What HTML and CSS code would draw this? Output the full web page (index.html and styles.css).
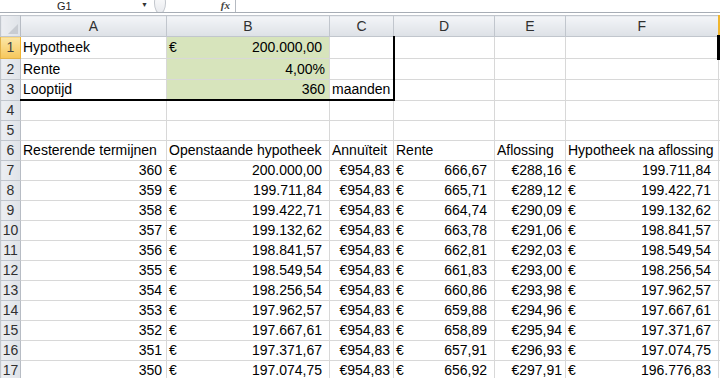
FILE: index.html
```html
<!DOCTYPE html>
<html lang="nl">
<head>
    <meta charset="UTF-8">
    <title>Hypotheek berekening</title>
    <link rel="stylesheet" href="styles.css">
</head>
<body>
    <!-- name box + formula bar -->
    <div class="formula-bar">
        <div class="name-box">
            <span class="cell-ref">G1</span>
            <span class="drop">&#9660;</span>
        </div>
        <div class="grip"></div>
        <div class="fx">fx</div>
        <div class="formula"></div>
    </div>

    <table class="sheet">
        <colgroup>
            <col class="c-row">
            <col class="c-a">
            <col class="c-b">
            <col class="c-c">
            <col class="c-d">
            <col class="c-e">
            <col class="c-f">
            <col class="c-g">
        </colgroup>
        <tr class="col-heads">
            <th class="corner"><span class="tri"></span></th>
            <th>A</th><th>B</th><th>C</th><th>D</th><th>E</th><th>F</th><th class="active-col"></th>
        </tr>
        <tr>
            <th class="active-row">1</th>
            <td>Hypotheek</td>
            <td class="input"><div class="money"><span>€</span><span>200.000,00</span></div></td>
            <td class="box-right"></td><td></td><td></td><td></td>
            <td class="active-cell"></td>
        </tr>
        <tr>
            <th>2</th>
            <td>Rente</td>
            <td class="input num">4,00%</td>
            <td class="box-right"></td><td></td><td></td><td></td><td></td>
        </tr>
        <tr>
            <th>3</th>
            <td class="box-bottom">Looptijd</td>
            <td class="input num box-bottom">360</td>
            <td class="box-right box-bottom">maanden</td><td></td><td></td><td></td><td></td>
        </tr>
        <tr><th>4</th><td></td><td></td><td></td><td></td><td></td><td></td><td></td></tr>
        <tr><th>5</th><td></td><td></td><td></td><td></td><td></td><td></td><td></td></tr>
        <tr>
            <th>6</th>
            <td>Resterende termijnen</td>
            <td>Openstaande hypotheek</td>
            <td>Annuïteit</td>
            <td>Rente</td>
            <td>Aflossing</td>
            <td>Hypotheek na aflossing</td>
            <td></td>
        </tr>
        <tbody id="schedule"></tbody>
    </table>

    <script>
        // aflossingsschema: termijn, openstaand, rente, aflossing, rest
        var rows = [
            [360, '200.000,00', '666,67', '288,16', '199.711,84'],
            [359, '199.711,84', '665,71', '289,12', '199.422,71'],
            [358, '199.422,71', '664,74', '290,09', '199.132,62'],
            [357, '199.132,62', '663,78', '291,06', '198.841,57'],
            [356, '198.841,57', '662,81', '292,03', '198.549,54'],
            [355, '198.549,54', '661,83', '293,00', '198.256,54'],
            [354, '198.256,54', '660,86', '293,98', '197.962,57'],
            [353, '197.962,57', '659,88', '294,96', '197.667,61'],
            [352, '197.667,61', '658,89', '295,94', '197.371,67'],
            [351, '197.371,67', '657,91', '296,93', '197.074,75'],
            [350, '197.074,75', '656,92', '297,91', '196.776,83']
        ];

        function money(value) {
            return '<div class="money"><span>€</span><span>' + value + '</span></div>';
        }

        var body = document.getElementById('schedule');
        rows.forEach(function(r, i) {
            var tr = document.createElement('tr');
            tr.innerHTML =
                '<th>' + (i + 7) + '</th>' +
                '<td class="num">' + r[0] + '</td>' +
                '<td>' + money(r[1]) + '</td>' +
                '<td class="num tight">€954,83</td>' +
                '<td>' + money(r[2]) + '</td>' +
                '<td class="num tight">€' + r[3] + '</td>' +
                '<td>' + money(r[4]) + '</td>' +
                '<td></td>';
            body.appendChild(tr);
        });
    </script>
</body>
</html>
```

FILE: styles.css
```css
html, body {
    margin: 0;
    overflow: hidden;
    background: #fff;
}
body {
    font-family: "Liberation Sans", Arial, sans-serif;
    font-size: 14px;
    color: #000;
    width: 720px;
    height: 378px;
}

/* formula bar */
.formula-bar {
    display: flex;
    align-items: flex-end;
    height: 12px;
    overflow: hidden;
    border-bottom: 1px solid #a7adb5;
    margin-bottom: 2px;
}
.name-box {
    width: 150px;
    position: relative;
    height: 12px;
}
.cell-ref {
    position: absolute;
    left: 57px;
    top: 0;
    font-size: 11px;
    line-height: 12px;
    color: #222;
}
.drop {
    position: absolute;
    left: 141px;
    top: 1px;
    font-size: 7px;
    line-height: 7px;
    color: #333;
}
.grip {
    width: 12px;
    height: 22px;
    margin-left: 4px;
    margin-bottom: -2px;
    border-radius: 50%;
    border: 1px solid #c3c7cd;
    background: linear-gradient(#fff, #e8eaee);
    box-sizing: border-box;
}
.fx {
    width: 70px;
    height: 12px;
    text-align: right;
    padding-right: 5px;
    box-sizing: border-box;
    font-family: "Liberation Serif", serif;
    font-style: italic;
    font-weight: bold;
    font-size: 11px;
    line-height: 11px;
    color: #444;
    border-right: 1px solid #b5bac1;
}
.formula {
    flex: 1;
}

/* grid */
.sheet {
    border-collapse: collapse;
    table-layout: fixed;
    width: 740px;
}
.c-row { width: 20px; }
.c-a { width: 146px; }
.c-b { width: 163px; }
.c-c { width: 64px; }
.c-d { width: 101px; }
.c-e { width: 71px; }
.c-f { width: 153px; }
.c-g { width: 22px; }

.sheet td, .sheet th {
    height: 19px;
    padding: 0 2px;
    line-height: 19px;
    white-space: nowrap;
    overflow: hidden;
    border: 1px solid #d8d8d8;
}
.sheet td {
    text-align: left;
}
.sheet th {
    font-weight: normal;
    color: #303030;
    background: linear-gradient(#f3f5f8, #dde1e6);
    border-color: #c1c6cd;
    padding: 0;
}
.col-heads th {
    text-align: center;
    border-top: 1px solid #c1c6cd;
}
.sheet tr > th:first-child {
    text-align: center;
    background: linear-gradient(90deg, #eceef2, #dfe3e8);
    border-right-color: #b7bcc4;
}
.col-heads th.corner {
    position: relative;
}
.tri {
    position: absolute;
    right: 2px;
    bottom: 2px;
    border-left: 10px solid transparent;
    border-bottom: 10px solid #c8ccd2;
}
.sheet tr > th.active-row {
    background: linear-gradient(#fbe6a6, #f6c75b);
    border-color: #e2b24a;
    border-right-color: #f2b530;
    color: #444;
}
.col-heads th.active-col {
    background: linear-gradient(#fbe6a6, #f6c75b);
    border-left: 2px solid #f0b62f;
}

.num {
    text-align: right !important;
    padding-right: 4px !important;
}
.tight {
    padding-right: 3px !important;
}
.money {
    display: flex;
    justify-content: space-between;
    padding-right: 5px;
}
.input {
    background: #d7e4bc;
}
.box-right {
    border-right: 2px solid #000 !important;
}
.box-bottom {
    border-bottom: 2px solid #000 !important;
}
.active-cell {
    border: 3px solid #000 !important;
}
```
